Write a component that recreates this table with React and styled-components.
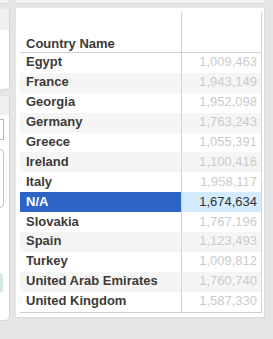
import React from "react";
import styled, { createGlobalStyle } from "styled-components";

const Global = createGlobalStyle`
  html, body { margin: 0; padding: 0; }
  body {
    background: #e5e5e5;
    font-family: "Liberation Sans", Arial, sans-serif;
  }
`;

const Page = styled.div`
  display: flex;
  flex-direction: column;
  width: 273px;
  height: 339px;
  overflow: hidden;
`;

const TopRow = styled.div`
  display: flex;
  gap: 7px;
  height: 3px;
`;

const Stub = styled.div`
  width: ${(p) => p.$w}px;
  background: #f1f1f1;
  box-shadow: 0 1px 0 #d9d9d9;
`;

const MainRow = styled.div`
  display: flex;
  gap: 7px;
  margin-top: 5px;
`;

const SideColumn = styled.div`
  width: 9px;
  display: flex;
  flex-direction: column;
  gap: 7px;
  margin-top: 1px;
`;

const SideCard = styled.div`
  height: ${(p) => p.$h}px;
  background: #fff;
  border-radius: 0 4px 4px 0;
  box-shadow: 1px 0 0 #d3d3d3, 0 1px 0 #d9d9d9;
  display: flex;
  flex-direction: column;
  overflow: hidden;
  padding-right: 5px;
`;

const SideHeader = styled.div`
  height: ${(p) => p.$h}px;
  margin-right: -5px;
  background: #f0f0f0;
  flex-shrink: 0;
`;

const InputBox = styled.div`
  margin-top: 4px;
  margin-left: -10px;
  height: 19px;
  border: 1px solid #b5b5b5;
  background: #fff;
`;

const ListBox = styled.div`
  margin-top: 9px;
  margin-left: -10px;
  height: 57px;
  border: 1px solid #c4c4c4;
  border-radius: 4px;
`;

const GreenPill = styled.div`
  margin-top: 65px;
  margin-left: -10px;
  margin-right: 1px;
  height: 20px;
  border-radius: 4px;
  background: #d3e8da;
`;

const Panel = styled.div`
  width: 248px;
  height: 309px;
  background: #fff;
  box-shadow: 1px 1px 0 #d8d8d8;
  padding: 4px 0 0 4px;
  box-sizing: border-box;
`;

const Table = styled.div`
  width: 241px;
  border-right: 1px solid #d4d4d4;
  border-bottom: 1px solid #cfcfcf;
`;

const Row = styled.div`
  display: grid;
  grid-template-columns: 161px 80px;
  height: 19.9px;
  background: ${(p) => (p.$striped ? "#f5f5f5" : "#fff")};
`;

const HeaderRow = styled(Row)`
  height: 40px;
  background: #fff;
  border-bottom: 1px solid #d0d0d0;
`;

const NameCell = styled.div`
  display: flex;
  align-items: center;
  padding: 0 0 2px 6px;
  font-size: 13px;
  font-weight: bold;
  color: ${(p) => (p.$selected ? "#fff" : "#3d3a38")};
  background: ${(p) => (p.$selected ? "#2e64c6" : "transparent")};
  white-space: nowrap;
  overflow: hidden;
`;

const HeaderLabel = styled(NameCell)`
  align-items: flex-end;
  padding-bottom: 1px;
`;

const ValueCell = styled.div`
  display: flex;
  align-items: center;
  justify-content: flex-end;
  padding: 0 4px 2px 0;
  border-left: 1px solid #d4d4d4;
  font-size: 13px;
  color: ${(p) => (p.$selected ? "#333" : "#cbcbcb")};
  background: ${(p) => (p.$selected ? "#d3ebfc" : "transparent")};
`;

const rows = [
  ["Egypt", "1,009,463"],
  ["France", "1,943,149"],
  ["Georgia", "1,952,098"],
  ["Germany", "1,763,243"],
  ["Greece", "1,055,391"],
  ["Ireland", "1,100,416"],
  ["Italy", "1,958,117"],
  ["N/A", "1,674,634"],
  ["Slovakia", "1,767,196"],
  ["Spain", "1,123,493"],
  ["Turkey", "1,009,812"],
  ["United Arab Emirates", "1,760,740"],
  ["United Kingdom", "1,587,330"],
];

const SELECTED = "N/A";

export default function App() {
  return (
    <>
      <Global />
      <Page>
        <TopRow>
          <Stub $w={9} />
          <Stub $w={248} />
        </TopRow>
        <MainRow>
          <SideColumn>
            <SideCard $h={80}>
              <SideHeader $h={21} />
            </SideCard>
            <SideCard $h={224}>
              <SideHeader $h={19} />
              <InputBox />
              <ListBox />
              <GreenPill />
            </SideCard>
          </SideColumn>
          <Panel>
            <Table>
              <HeaderRow>
                <HeaderLabel>Country Name</HeaderLabel>
                <ValueCell />
              </HeaderRow>
              {rows.map(([name, value], i) => {
                const sel = name === SELECTED;
                return (
                  <Row key={name} $striped={i % 2 === 1}>
                    <NameCell $selected={sel}>{name}</NameCell>
                    <ValueCell $selected={sel}>{value}</ValueCell>
                  </Row>
                );
              })}
            </Table>
          </Panel>
        </MainRow>
      </Page>
    </>
  );
}
